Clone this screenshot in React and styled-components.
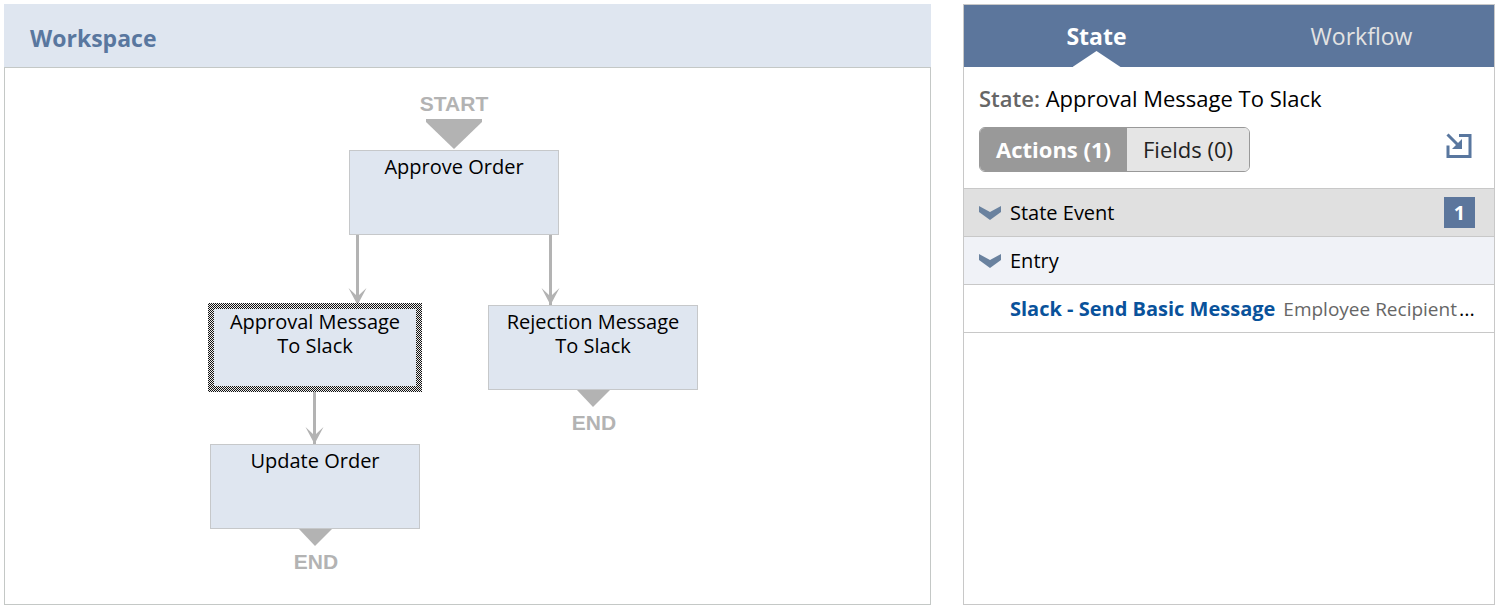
import React, { useState } from "react";
import styled, { createGlobalStyle, css } from "styled-components";

const GlobalStyle = createGlobalStyle`
  *, *::before, *::after { box-sizing: border-box; }
  body {
    margin: 0;
    background: #fff;
    color: #000;
    font-family: "Open Sans", "Noto Sans", sans-serif;
    font-size: 20px;
    line-height: 24px;
  }
  button { font: inherit; margin: 0; cursor: pointer; }
`;

const Page = styled.main`
  display: grid;
  grid-template-columns: minmax(0, 927fr) minmax(0, 532fr);
  gap: 32px;
  min-height: 100vh;
  padding: 4px 5px 3px 4px;
`;

const WorkspacePanel = styled.section`
  display: flex;
  flex-direction: column;
`;

const WorkspaceHeader = styled.header`
  padding: 18px 26px 13px;
  background: #dfe6f0;
`;

const WorkspaceTitle = styled.h1`
  margin: 0;
  color: #59779f;
  font-size: 23px;
  line-height: 32px;
  font-weight: 700;
`;

const Canvas = styled.div`
  position: relative;
  flex: 1;
  min-height: 536px;
  overflow: hidden;
  border: 1px solid #c4c8c6;
`;

const Connectors = styled.svg`
  display: block;
`;

const Node = styled.button`
  position: absolute;
  left: ${(p) => p.$x}px;
  top: ${(p) => p.$y}px;
  display: flex;
  justify-content: center;
  align-items: flex-start;
  width: 210px;
  height: 85px;
  padding: 4px 12px;
  border: 1px solid #c6c8ca;
  background: #dfe6f0;
  color: #000;
  font-size: 20px;
  line-height: 24px;
  text-align: center;
  ${(p) =>
    p.$selected &&
    css`
      border-color: #dfe6f0;
      &::before {
        content: "";
        position: absolute;
        inset: -3px;
        padding: 6px;
        background: repeating-conic-gradient(#111 0 25%, #eee 0 50%) 0 0 / 2px 2px;
        mask: linear-gradient(#000 0 0) content-box exclude, linear-gradient(#000 0 0);
      }
    `}
`;

const Marker = styled.span`
  position: absolute;
  left: ${(p) => p.$x}px;
  top: ${(p) => p.$y}px;
  width: 90px;
  color: #b3b3b3;
  font-family: "Liberation Sans", Arial, sans-serif;
  font-size: 21px;
  font-weight: 700;
  line-height: 24px;
  text-align: center;
`;

const Inspector = styled.aside`
  display: flex;
  flex-direction: column;
  border: 1px solid #c8c8c8;
`;

const TabBar = styled.div`
  display: grid;
  grid-template-columns: 1fr 1fr;
  background: #5c769c;
`;

const Tab = styled.button`
  position: relative;
  height: 62px;
  padding: 0;
  border: 0;
  background: none;
  color: ${(p) => (p.$active ? "#fff" : "#e3e3e3")};
  font-size: 23px;
  font-weight: ${(p) => (p.$active ? 700 : 400)};
  line-height: 30px;
  ${(p) =>
    p.$active &&
    css`
      &::after {
        content: "";
        position: absolute;
        left: calc(50% - 24px);
        bottom: 0;
        width: 48px;
        height: 16px;
        background: #fff;
        clip-path: polygon(50% 0, 100% 100%, 0 100%);
      }
    `}
`;

const Summary = styled.div`
  padding: 16px 15px;
`;

const StateName = styled.p`
  margin: 0;
  font-size: 22px;
  line-height: 30px;
`;

const StateLabel = styled.span`
  color: #666;
  font-weight: 600;
`;

const Toolbar = styled.div`
  display: flex;
  align-items: center;
  justify-content: space-between;
  margin-top: 14px;
  padding-right: 7px;
`;

const Segments = styled.div`
  display: flex;
  overflow: hidden;
  border: 1px solid #999;
  border-radius: 6px;
`;

const Segment = styled.button`
  height: 43px;
  padding: 0 16px 2px;
  border: 0;
  background: ${(p) => (p.$active ? "#999" : "#e5e5e5")};
  color: ${(p) => (p.$active ? "#fff" : "#222")};
  font-size: 22px;
  font-weight: ${(p) => (p.$active ? 700 : 400)};
`;

const IconButton = styled.button`
  display: flex;
  padding: 0 0 8px;
  border: 0;
  background: none;
  color: #59779f;
`;

const Row = styled.div`
  display: flex;
  align-items: center;
  height: 48px;
  padding: 0 19px 0 ${(p) => (p.$indent ? 46 : 15)}px;
  border-top: 1px solid #c8c8c8;
  background: ${(p) => p.$tone || "#fff"};
  &:last-child {
    height: 49px;
    border-bottom: 1px solid #c8c8c8;
  }
`;

const Toggle = styled.button`
  display: flex;
  flex: 1;
  align-items: center;
  gap: 9px;
  padding: 0;
  border: 0;
  background: none;
  color: #000;
`;

const Badge = styled.span`
  width: 31px;
  height: 31px;
  background: #5c769c;
  color: #fff;
  font-weight: 700;
  line-height: 31px;
  text-align: center;
`;

const ActionLink = styled.a`
  flex: none;
  color: #09529b;
  font-weight: 700;
  text-decoration: none;
`;

const ActionNote = styled.span`
  flex: none;
  margin-left: 8px;
  color: #666;
  font-size: 19px;
`;

const More = styled.span`
  margin-left: 2px;
`;

const nodes = [
  { id: "approve", label: "Approve Order", x: 344, y: 82 },
  { id: "approval", label: "Approval Message To Slack", x: 205, y: 237 },
  { id: "rejection", label: "Rejection Message To Slack", x: 483, y: 237 },
  { id: "update", label: "Update Order", x: 205, y: 376 },
];

const arrows = [
  { x: 352, from: 167, to: 237 },
  { x: 545, from: 167, to: 237 },
  { x: 309, from: 322, to: 376 },
];

const Chevron = () => (
  <svg width="22" height="15" viewBox="0 0 22 15" aria-hidden="true">
    <path d="M0 1 L11 7 L22 1 V7 L11 15 L0 7 Z" fill="#6a829f" />
  </svg>
);

export default function App() {
  const [selected, setSelected] = useState("approval");
  const [tab, setTab] = useState("State");
  const [view, setView] = useState("Actions (1)");
  const current = nodes.find((n) => n.id === selected);

  return (
    <>
      <GlobalStyle />
      <Page>
        <WorkspacePanel>
          <WorkspaceHeader>
            <WorkspaceTitle>Workspace</WorkspaceTitle>
          </WorkspaceHeader>
          <Canvas>
            <Connectors width="740" height="500" viewBox="0 0 740 500" fill="#b3b3b3" aria-hidden="true">
              <path d="M421 51H477V54L449 81L421 54Z" />
              <path d="M572 322H605L588 339Z" />
              <path d="M294 461H327L310 478Z" />
              {arrows.map((a) => (
                <g key={a.x}>
                  <path d={`M${a.x - 1} ${a.from}h3V${a.to}h-3Z`} />
                  <path d={`M${a.x + 0.5} ${a.to}l-9 -17l7.5 7h3l7.5 -7l-9 17Z`} />
                </g>
              ))}
            </Connectors>
            <Marker $x={404} $y={24}>START</Marker>
            {nodes.map((n) => (
              <Node key={n.id} $x={n.x} $y={n.y} $selected={n.id === selected} onClick={() => setSelected(n.id)}>
                {n.label}
              </Node>
            ))}
            <Marker $x={544} $y={343}>END</Marker>
            <Marker $x={266} $y={482}>END</Marker>
          </Canvas>
        </WorkspacePanel>

        <Inspector>
          <TabBar role="tablist">
            {["State", "Workflow"].map((t) => (
              <Tab key={t} role="tab" aria-selected={t === tab} $active={t === tab} onClick={() => setTab(t)}>
                {t}
              </Tab>
            ))}
          </TabBar>
          <Summary>
            <StateName>
              <StateLabel>State:</StateLabel> {current.label}
            </StateName>
            <Toolbar>
              <Segments>
                {["Actions (1)", "Fields (0)"].map((v) => (
                  <Segment key={v} $active={v === view} onClick={() => setView(v)}>
                    {v}
                  </Segment>
                ))}
              </Segments>
              <IconButton aria-label="Open state">
                <svg width="26" height="26" viewBox="0 0 26 26" fill="none" stroke="currentColor" strokeWidth="3" aria-hidden="true">
                  <path d="M13 2.5H24V23.5H2V12.5" />
                  <path d="M1.5 1.5L12 12" />
                  <path d="M16 6V16H6Z" fill="currentColor" stroke="none" />
                </svg>
              </IconButton>
            </Toolbar>
          </Summary>
          <div>
            <Row $tone="#e0e0e0">
              <Toggle aria-expanded="true"><Chevron />State Event</Toggle>
              <Badge>1</Badge>
            </Row>
            <Row $tone="#f0f2f7">
              <Toggle aria-expanded="true"><Chevron />Entry</Toggle>
            </Row>
            <Row $indent>
              <ActionLink href="#action">Slack - Send Basic Message</ActionLink>
              <ActionNote>Employee Recipient</ActionNote>
              <More>...</More>
            </Row>
          </div>
        </Inspector>
      </Page>
    </>
  );
}
